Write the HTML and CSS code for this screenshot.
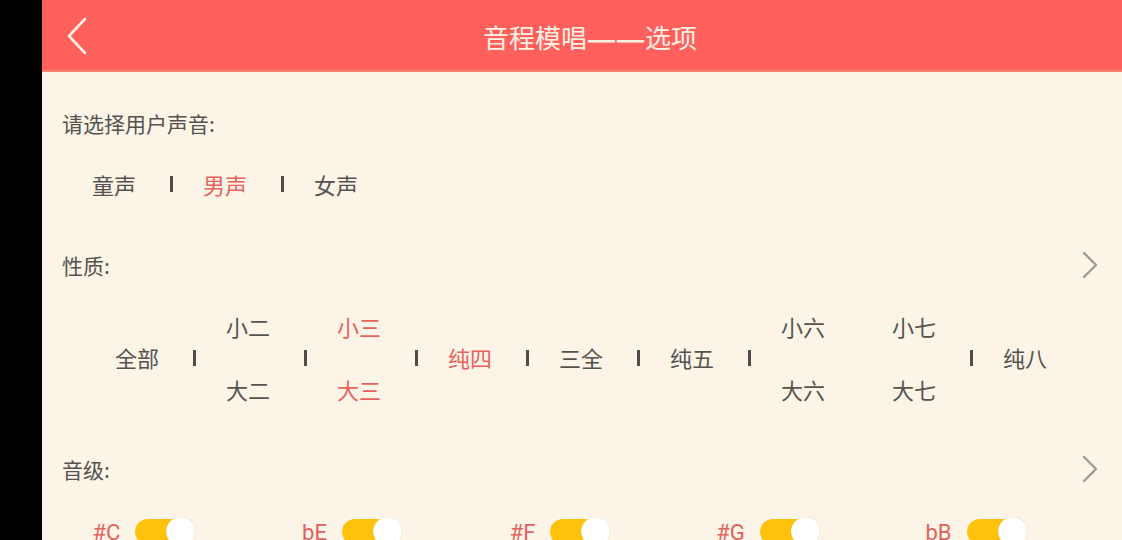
FILE: index.html
```html
<!DOCTYPE html>
<html lang="zh">
<head>
<meta charset="utf-8">
<link rel="stylesheet" href="styles.css">
</head>
<body>
<div class="screen">
  <header class="topbar">
    <svg class="back" width="24" height="40" viewBox="0 0 24 40"><path d="M19 3 L3 20 L19 37" fill="none" stroke="#FCEFE4" stroke-width="2.6" stroke-linecap="round" stroke-linejoin="round"/></svg>
    <div class="title">音程模唱<span class="dash">—</span><span class="dash">—</span>选项</div>
  </header>
  <main class="content">
    <div class="label first">请选择用户声音:</div>
    <div class="opts voice">
      <span class="opt">童声</span><span class="sep"></span>
      <span class="opt on">男声</span><span class="sep"></span>
      <span class="opt">女声</span>
    </div>

    <div class="label row-head">性质:
      <svg class="chev" width="16" height="28" viewBox="0 0 16 28"><path d="M2 2 L14 14 L2 26" fill="none" stroke="#9E9A94" stroke-width="2.4" stroke-linecap="round" stroke-linejoin="round"/></svg>
    </div>
    <div class="opts intervals">
      <span class="opt">全部</span><span class="sep"></span>
      <span class="stack"><span class="opt">小二</span><span class="opt">大二</span></span><span class="sep"></span>
      <span class="stack"><span class="opt on">小三</span><span class="opt on">大三</span></span><span class="sep"></span>
      <span class="opt on">纯四</span><span class="sep"></span>
      <span class="opt">三全</span><span class="sep"></span>
      <span class="opt">纯五</span><span class="sep"></span>
      <span class="stack"><span class="opt">小六</span><span class="opt">大六</span></span><span class="sep hidden"></span>
      <span class="stack"><span class="opt">小七</span><span class="opt">大七</span></span><span class="sep"></span>
      <span class="opt">纯八</span>
    </div>

    <div class="label row-head second">音级:
      <svg class="chev" width="16" height="28" viewBox="0 0 16 28"><path d="M2 2 L14 14 L2 26" fill="none" stroke="#9E9A94" stroke-width="2.4" stroke-linecap="round" stroke-linejoin="round"/></svg>
    </div>
    <div class="toggles">
      <div class="tcell"><span class="tlabel">#C</span><span class="switch"><span class="knob"></span></span></div>
      <div class="tcell"><span class="tlabel">bE</span><span class="switch"><span class="knob"></span></span></div>
      <div class="tcell"><span class="tlabel">#F</span><span class="switch"><span class="knob"></span></span></div>
      <div class="tcell"><span class="tlabel">#G</span><span class="switch"><span class="knob"></span></span></div>
      <div class="tcell"><span class="tlabel">bB</span><span class="switch"><span class="knob"></span></span></div>
    </div>
  </main>
</div>
</body>
</html>
```
FILE: styles.css
```css
html, body {
  margin: 0;
  padding: 0;
  background: #000;
  height: 540px;
  overflow: hidden;
}
.screen {
  margin-left: 42px;
  height: 540px;
  background: #FCF5E7;
  font-family: "Noto Sans CJK SC", "Noto Sans", sans-serif;
  color: #555250;
}
.topbar {
  height: 70px;
  background: #FF605C;
  border-bottom: 2px solid #F7836F;
  display: flex;
  align-items: center;
  position: relative;
}
.back {
  margin-left: 24px;
  margin-top: 1px;
}
.title {
  position: absolute;
  left: 0;
  right: 0;
  top: 0;
  height: 74px;
  line-height: 74px;
  text-align: center;
  padding-left: 16px;
  font-size: 26px;
  color: #FCF0E4;
  pointer-events: none;
}
.dash {
  display: inline-block;
  width: 29px;
  text-align: center;
  font-family: "Noto Sans CJK SC", sans-serif;
  font-weight: 500;
  transform: scale(1.3, 1.2);
}
.content {
  padding-left: 20px;
  padding-right: 24px;
}
.label {
  font-size: 21px;
  line-height: 30px;
}
.first { margin-top: 36px; }
.opts {
  display: flex;
  align-items: center;
  font-size: 22px;
}
.voice {
  margin-top: 31px;
  padding-left: 30px;
  line-height: 30px;
}
.opt {
  width: 44px;
  white-space: nowrap;
  display: block;
}
.on { color: #E8625D; }
.sep {
  width: 3px;
  height: 16px;
  background: #4F4B48;
  margin-left: 34px;
  margin-right: 30px;
}
.sep.hidden { visibility: hidden; }
.row-head {
  display: flex;
  justify-content: space-between;
  align-items: center;
  margin-top: 51px;
}
.chev { margin-right: 0; }
.intervals {
  margin-top: 31px;
  padding-left: 53px;
  line-height: 31px;
  height: 93px;
}
.stack {
  display: flex;
  flex-direction: column;
  justify-content: space-between;
  height: 94px;
}
.second { margin-top: 50px; }
.toggles {
  display: flex;
  margin-left: -22px;
  margin-top: 30px;
}
.tcell {
  width: 208px;
  display: flex;
  justify-content: center;
  align-items: center;
  gap: 15px;
}
.tlabel {
  font-family: Roboto, "Noto Sans", sans-serif;
  font-size: 22px;
  color: #E0625C;
  line-height: 30px;
  margin-top: 4px;
}
.switch {
  position: relative;
  width: 60px;
  height: 29px;
  display: block;
}
.switch::before {
  content: "";
  position: absolute;
  left: 0;
  top: 2px;
  width: 52px;
  height: 26px;
  border-radius: 13px;
  background: #FFC10A;
}
.knob {
  position: absolute;
  right: 0;
  top: 0;
  width: 29px;
  height: 29px;
  border-radius: 50%;
  background: #FFFFFF;
  box-shadow: 0 0 1px rgba(0,0,0,0.2);
}
```
